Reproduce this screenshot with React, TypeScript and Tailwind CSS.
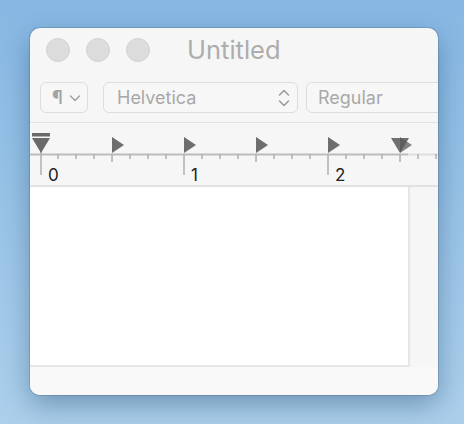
const TABS = [82, 154, 226, 298, 370];

function Ruler() {
  const ticks = Array.from({ length: 23 }, (_, k) => k);
  return (
    <svg width="408" height="62" viewBox="0 0 408 62" className="block">
      <rect x="0" y="30.5" width="378" height="2" fill="#bcbcbc" />
      <rect x="378" y="30.5" width="30" height="2" fill="#dedede" />
      {ticks.map(k => {
        const x = 10 + 18 * k;
        const len = k % 8 === 0 ? 21 : k % 4 === 0 ? 8 : 5;
        if (k === 0) return null;
        return <rect key={k} x={x - 0.75} y={31} width="1.5" height={len} fill="#b0b0b0" />;
      })}
      <rect x="10.25" y="27" width="1.5" height="25" fill="#b0b0b0" />
      {TABS.map(x => (
        <polygon key={x} points={`${x},14 ${x + 12},22 ${x},30`} fill="#6e6e6e" fillOpacity={x === 370 ? 0.85 : 1} />
      ))}
      <polygon points="361,15 379,15 370,30" fill="#585858" fillOpacity="0.85" />
      <rect x="2" y="10" width="18" height="3.5" fill="#6a6a6a" />
      <polygon points="2,15 20,15 11,30" fill="#6a6a6a" />
      <text x="18" y="58" fontSize="17" fill="#222" fontFamily="Inter, sans-serif">0</text>
      <text x="161" y="58" fontSize="17" fill="#222" fontFamily="Inter, sans-serif">1</text>
      <text x="305" y="58" fontSize="17" fill="#222" fontFamily="Inter, sans-serif">2</text>
    </svg>
  );
}

export default function App() {
  return (
    <div className="w-[464px] h-[424px] overflow-hidden bg-gradient-to-b from-[#86b8e3] to-[#acd0ec] pt-[28px] pl-[30px] font-['Inter',sans-serif]">
      <div className="w-[408px] h-[367px] rounded-[10px] bg-[#f6f6f6] overflow-hidden flex flex-col shadow-[0_0_0_1px_rgba(0,0,0,0.12),0_10px_28px_rgba(0,40,80,0.35)]">
        <div className="h-[44px] shrink-0 flex items-center pl-[16px]">
          <div className="flex gap-[16px]">
            <span className="w-[24px] h-[24px] rounded-full bg-[#dcdcdc] border border-[#d2d2d2]" />
            <span className="w-[24px] h-[24px] rounded-full bg-[#dcdcdc] border border-[#d2d2d2]" />
            <span className="w-[24px] h-[24px] rounded-full bg-[#dcdcdc] border border-[#d2d2d2]" />
          </div>
          <span className="ml-[37px] text-[25.5px] text-[#adadad] leading-none">Untitled</span>
        </div>
        <div className="h-[51px] shrink-0 flex items-start pt-[10px] pl-[10px] gap-[15px] border-b border-[#e2e2e2] whitespace-nowrap">
          <div className="w-[48px] h-[31px] shrink-0 rounded-[6px] border border-[#dddddd] bg-[#f7f7f7] flex items-center pl-[11px] gap-[6px] text-[#a3a3a3] text-[18px]">
            <span className="font-semibold">¶</span>
            <svg width="12" height="8" viewBox="0 0 12 8" fill="none" stroke="#a3a3a3" strokeWidth="1.6" strokeLinecap="round" strokeLinejoin="round">
              <polyline points="1.5,2 6,6.5 10.5,2" />
            </svg>
          </div>
          <div className="flex gap-[8px] shrink-0">
            <div className="w-[195px] h-[31px] shrink-0 rounded-[6px] border border-[#dddddd] bg-[#f7f7f7] flex items-center justify-between pl-[13px] pr-[7px] text-[18px] text-[#a8a8a8]">
              <span>Helvetica</span>
              <svg width="12" height="20" viewBox="0 0 12 20" fill="none" stroke="#9c9c9c" strokeWidth="1.6" strokeLinecap="round" strokeLinejoin="round">
                <polyline points="1.5,7 6,2.5 10.5,7" />
                <polyline points="1.5,13 6,17.5 10.5,13" />
              </svg>
            </div>
            <div className="w-[160px] h-[31px] shrink-0 rounded-[6px] border border-[#dddddd] bg-[#f7f7f7] flex items-center pl-[11px] text-[18px] text-[#a8a8a8]">
              <span>Regular</span>
            </div>
          </div>
        </div>
        <div className="h-[64px] shrink-0 border-b-2 border-[#e2e2e2]">
          <Ruler />
        </div>
        <div className="flex shrink-0">
          <div className="w-[380px] h-[180px] bg-white border-r-2 border-b-2 border-[#e6e6e6]" />
          <div className="flex-1 bg-[#f6f6f6]" />
        </div>
        <div className="flex-1 bg-[#f9f9f9]" />
      </div>
    </div>
  );
}
